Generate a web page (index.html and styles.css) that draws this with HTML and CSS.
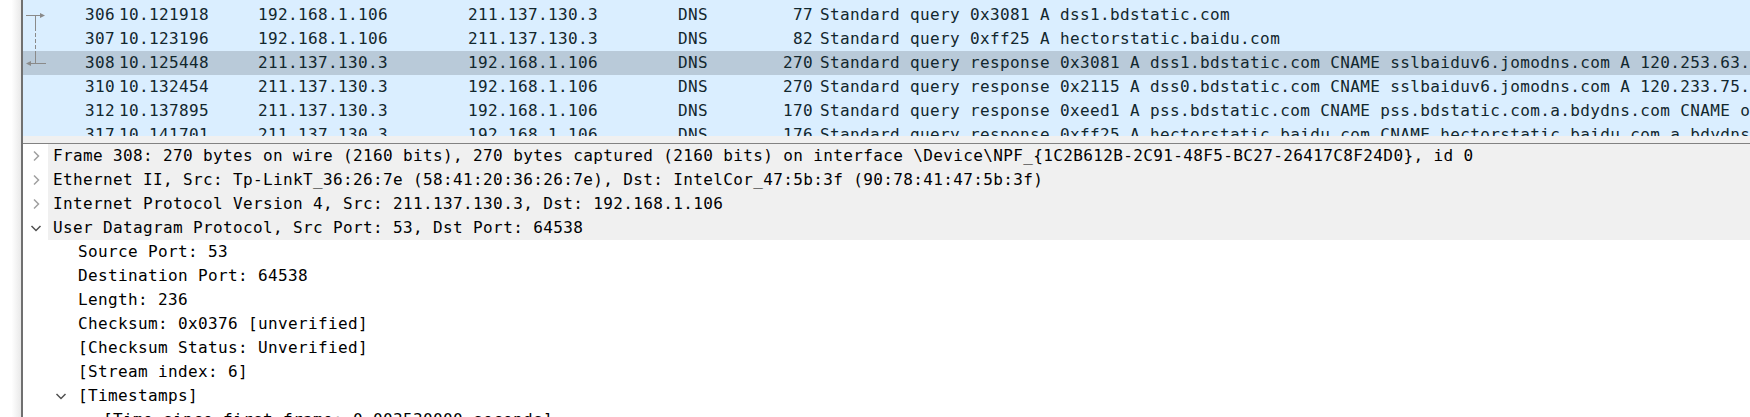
FILE: index.html
```html
<!DOCTYPE html>
<html>
<head>
<meta charset="utf-8">
<link rel="stylesheet" href="styles.css">
</head>
<body>
<div class="edge"></div>
<div class="main">
  <div class="plist">
    <div class="row">
      <div class="c no"><svg class="rel" width="25" height="24" viewBox="0 0 25 24"><path d="M3 12.5H18M12.5 12.5V24" stroke="#8a8a8a" stroke-width="1" fill="none"/><path d="M17 10L22 12.5L17 15Z" fill="#8a8a8a"/></svg><span>306</span></div>
      <div class="c t">10.121918</div><div class="c s">192.168.1.106</div><div class="c d">211.137.130.3</div><div class="c p">DNS</div><div class="c l">77</div>
      <div class="c i">Standard query 0x3081 A dss1.bdstatic.com</div>
    </div>
    <div class="row">
      <div class="c no"><svg class="rel" width="25" height="24" viewBox="0 0 25 24"><path d="M12.5 0V24" stroke="#8a8a8a" stroke-width="1" stroke-dasharray="4 2" fill="none"/></svg><span>307</span></div>
      <div class="c t">10.123196</div><div class="c s">192.168.1.106</div><div class="c d">211.137.130.3</div><div class="c p">DNS</div><div class="c l">82</div>
      <div class="c i">Standard query 0xff25 A hectorstatic.baidu.com</div>
    </div>
    <div class="row sel">
      <div class="c no"><svg class="rel" width="25" height="24" viewBox="0 0 25 24"><path d="M12.5 0V12.5M8 12.5H23" stroke="#8a8a8a" stroke-width="1" fill="none"/><path d="M8 10L3 12.5L8 15Z" fill="#8a8a8a"/></svg><span>308</span></div>
      <div class="c t">10.125448</div><div class="c s">211.137.130.3</div><div class="c d">192.168.1.106</div><div class="c p">DNS</div><div class="c l">270</div>
      <div class="c i">Standard query response 0x3081 A dss1.bdstatic.com CNAME sslbaiduv6.jomodns.com A 120.253.63.</div>
    </div>
    <div class="row">
      <div class="c no"><span>310</span></div>
      <div class="c t">10.132454</div><div class="c s">211.137.130.3</div><div class="c d">192.168.1.106</div><div class="c p">DNS</div><div class="c l">270</div>
      <div class="c i">Standard query response 0x2115 A dss0.bdstatic.com CNAME sslbaiduv6.jomodns.com A 120.233.75.</div>
    </div>
    <div class="row">
      <div class="c no"><span>312</span></div>
      <div class="c t">10.137895</div><div class="c s">211.137.130.3</div><div class="c d">192.168.1.106</div><div class="c p">DNS</div><div class="c l">170</div>
      <div class="c i">Standard query response 0xeed1 A pss.bdstatic.com CNAME pss.bdstatic.com.a.bdydns.com CNAME o</div>
    </div>
    <div class="row">
      <div class="c no"><span>317</span></div>
      <div class="c t">10.141701</div><div class="c s">211.137.130.3</div><div class="c d">192.168.1.106</div><div class="c p">DNS</div><div class="c l">176</div>
      <div class="c i">Standard query response 0xff25 A hectorstatic.baidu.com CNAME hectorstatic.baidu.com.a.bdydns</div>
    </div>
  </div>
  <div class="split"></div>
  <div class="dpane">
    <div class="drow top"><div class="exp"><svg width="8" height="12" viewBox="0 0 8 12"><path d="M2 1.5L6.5 6L2 10.5" stroke="#a0a0a0" stroke-width="1.5" fill="none"/></svg></div><div class="dt">Frame 308: 270 bytes on wire (2160 bits), 270 bytes captured (2160 bits) on interface \Device\NPF_{1C2B612B-2C91-48F5-BC27-26417C8F24D0}, id 0</div></div>
    <div class="drow top"><div class="exp"><svg width="8" height="12" viewBox="0 0 8 12"><path d="M2 1.5L6.5 6L2 10.5" stroke="#a0a0a0" stroke-width="1.5" fill="none"/></svg></div><div class="dt">Ethernet II, Src: Tp-LinkT_36:26:7e (58:41:20:36:26:7e), Dst: IntelCor_47:5b:3f (90:78:41:47:5b:3f)</div></div>
    <div class="drow top"><div class="exp"><svg width="8" height="12" viewBox="0 0 8 12"><path d="M2 1.5L6.5 6L2 10.5" stroke="#a0a0a0" stroke-width="1.5" fill="none"/></svg></div><div class="dt">Internet Protocol Version 4, Src: 211.137.130.3, Dst: 192.168.1.106</div></div>
    <div class="drow top"><div class="exp"><svg width="12" height="8" viewBox="0 0 12 8"><path d="M1.5 2L6 6.5L10.5 2" stroke="#505050" stroke-width="1.5" fill="none"/></svg></div><div class="dt">User Datagram Protocol, Src Port: 53, Dst Port: 64538</div></div>
    <div class="drow"><div class="ind"></div><div class="exp"></div><div class="dt">Source Port: 53</div></div>
    <div class="drow"><div class="ind"></div><div class="exp"></div><div class="dt">Destination Port: 64538</div></div>
    <div class="drow"><div class="ind"></div><div class="exp"></div><div class="dt">Length: 236</div></div>
    <div class="drow"><div class="ind"></div><div class="exp"></div><div class="dt">Checksum: 0x0376 [unverified]</div></div>
    <div class="drow"><div class="ind"></div><div class="exp"></div><div class="dt">[Checksum Status: Unverified]</div></div>
    <div class="drow"><div class="ind"></div><div class="exp"></div><div class="dt">[Stream index: 6]</div></div>
    <div class="drow"><div class="ind"></div><div class="exp"><svg width="12" height="8" viewBox="0 0 12 8"><path d="M1.5 2L6 6.5L10.5 2" stroke="#505050" stroke-width="1.5" fill="none"/></svg></div><div class="dt">[Timestamps]</div></div>
    <div class="drow"><div class="ind"></div><div class="ind"></div><div class="exp"></div><div class="dt">[Time since first frame: 0.003530000 seconds]</div></div>
  </div>
</div>
</body>
</html>
```

FILE: styles.css
```css
html, body {
  margin: 0;
  padding: 0;
  height: 417px;
  overflow: hidden;
  background: #ffffff;
}
body {
  display: flex;
  font-family: "DejaVu Sans Mono", monospace;
  font-size: 16px;
  letter-spacing: 0.37px;
}
.edge {
  width: 21px;
  flex: none;
  background: linear-gradient(to right, #ffffff 0, #ffffff 55%, #e9e9e9 100%);
}
.main {
  flex: 1;
  min-width: 0;
  border-left: 2px solid #707070;
  display: flex;
  flex-direction: column;
}
.plist {
  height: 136px;
  flex: none;
  box-sizing: border-box;
  padding-top: 3px;
  overflow: hidden;
  background: #daeeff;
  color: #12272e;
}
.row {
  display: grid;
  grid-template-columns: 95px 140px 210px 210px 82px 56px 1fr;
  height: 24px;
  line-height: 24px;
  white-space: nowrap;
}
.row.sel {
  background: #b9cad9;
}
.c {
  overflow: hidden;
}
.no {
  display: flex;
  justify-content: flex-end;
  padding-right: 3px;
}
.no .rel {
  margin-right: auto;
  display: block;
}
.t { padding-left: 1px; }
.l {
  text-align: right;
  padding-right: 3px;
}
.i { padding-left: 4px; }
.split {
  height: 7px;
  flex: none;
  background: #f0f0f0;
}
.dpane {
  flex: 1;
  border-top: 1px solid #828282;
  background: #ffffff;
  color: #000000;
  overflow: hidden;
}
.drow {
  display: flex;
  height: 24px;
  line-height: 24px;
  white-space: nowrap;
}
.ind, .exp {
  width: 25px;
  flex: none;
}
.exp {
  display: flex;
  align-items: center;
  justify-content: center;
}
.exp svg { display: block; }
.dt {
  padding-left: 5px;
  flex: 1;
}
.drow.top .dt {
  background: #f0f0f0;
}
```
